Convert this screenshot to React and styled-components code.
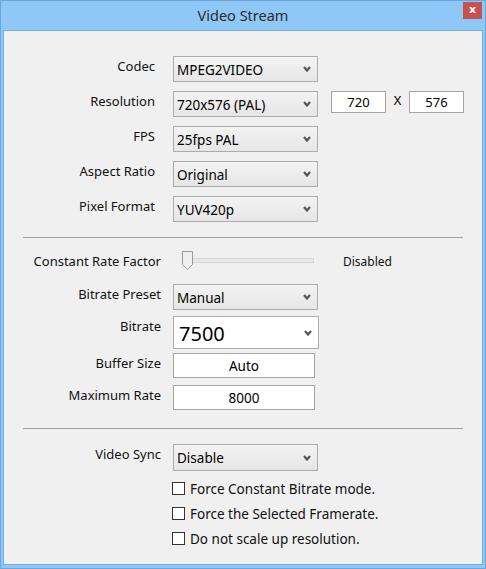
import React from 'react';
import styled, { createGlobalStyle } from 'styled-components';

const GlobalStyle = createGlobalStyle`
  html, body { margin: 0; padding: 0; background: #8fc7f7; }
  body { font-family: "Noto Sans", "Open Sans", Arial, sans-serif; color: #000; }
  * { box-sizing: border-box; }
`;

const Frame = styled.div`
  width: 486px;
  height: 569px;
  background: #8fc7f7;
  border: 1px solid #6aa6df;
  display: flex;
  flex-direction: column;
  padding: 0 2px 3px 2px;
`;

const TitleBar = styled.div`
  height: 29px;
  position: relative;
  display: flex;
  justify-content: center;
  align-items: center;
  padding-bottom: 2px;
  font-size: 14.5px;
  color: #2b2b2b;
`;

const CloseButton = styled.div`
  position: absolute;
  top: 1px;
  right: 1px;
  width: 19px;
  height: 17px;
  background: #c75050;
  color: #fff;
  font-family: "DejaVu Sans", sans-serif;
  font-weight: 700;
  font-size: 11px;
  line-height: 15px;
  text-align: center;
`;

const Content = styled.div`
  flex: 1;
  background: #f0f0f0;
  border: 1px solid #74ade3;
  padding-top: 25px;
  display: flex;
  flex-direction: column;
`;

const Row = styled.div`
  display: flex;
  align-items: ${p => (p.$center ? 'center' : 'flex-start')};
  margin-top: ${p => p.$mt || 0}px;
  height: ${p => p.$h || 26}px;
`;

const Label = styled.div`
  width: 169px;
  padding-right: ${p => p.$inset || 18}px;
  padding-top: ${p => (p.$center ? 0 : 1)}px;
  text-align: right;
  font-size: 13px;
  line-height: 18px;
  color: #111;
  white-space: nowrap;
`;

const Combo = styled.div`
  width: ${p => p.$w || 145}px;
  height: 100%;
  border: 1px solid #acacac;
  background: ${p => (p.$editable ? '#fff' : 'linear-gradient(#f3f3f3, #e6e6e6)')};
  display: flex;
  align-items: center;
  padding: 0 6px 0 ${p => (p.$big ? 5 : 3)}px;
  font-size: ${p => (p.$big ? 20 : 13.5)}px;
  color: #000;
`;

const ComboText = styled.span`
  flex: 1;
  white-space: nowrap;
  padding-top: ${p => (p.$big ? 2 : 1)}px;
`;

const Field = styled.div`
  width: ${p => p.$w}px;
  height: ${p => p.$h}px;
  margin-left: ${p => p.$ml || 0}px;
  background: #fff;
  border: 1px solid #a5a5a5;
  display: flex;
  align-items: center;
  justify-content: center;
  font-size: ${p => p.$fs || 13}px;
`;

const Times = styled.span`
  width: 23px;
  text-align: center;
  font-size: 13px;
  padding-bottom: 4px;
`;

const Separator = styled.div`
  margin: ${p => p.$mt}px 0 0 19px;
  width: 440px;
  height: 1px;
  background: #a0a0a0;
`;

const SliderWrap = styled.div`
  position: relative;
  width: 132px;
  height: 20px;
  margin-left: 9px;
`;

const Track = styled.div`
  position: absolute;
  left: 3px;
  right: 0;
  top: 7px;
  height: 5px;
  background: #e7eaea;
  border: 1px solid #d6d6d6;
`;

const Thumb = styled.svg`
  position: absolute;
  left: 0;
  top: 0;
`;

const Status = styled.span`
  margin-left: 29px;
  font-size: 12px;
  color: #111;
`;

const CheckRow = styled.label`
  display: flex;
  align-items: center;
  height: 25px;
  padding-left: 168px;
  font-size: 13.5px;
  color: #111;
  margin-top: ${p => p.$mt || 0}px;
`;

const Box = styled.span`
  width: 13px;
  height: 13px;
  border: 1px solid #333;
  background: #fff;
  margin-right: 5px;
  flex: none;
`;

const Chevron = () => (
  <svg width="8" height="6" viewBox="0 0 8 6">
    <polyline points="1,1 4,4.5 7,1" fill="none" stroke="#555" strokeWidth="2.2" />
  </svg>
);

const Select = ({ value, w, big, editable }) => (
  <Combo $w={w} $big={big} $editable={editable}>
    <ComboText $big={big}>{value}</ComboText>
    <Chevron />
  </Combo>
);

const App = () => (
  <>
    <GlobalStyle />
    <Frame>
      <TitleBar>
        Video Stream
        <CloseButton>x</CloseButton>
      </TitleBar>
      <Content>
        <Row>
          <Label>Codec</Label>
          <Select value="MPEG2VIDEO" />
        </Row>
        <Row $mt={9}>
          <Label>Resolution</Label>
          <Select value="720x576 (PAL)" />
          <Field $w={55} $h={22} $ml={13}>720</Field>
          <Times>X</Times>
          <Field $w={55} $h={22}>576</Field>
        </Row>
        <Row $mt={9}>
          <Label>FPS</Label>
          <Select value="25fps PAL" />
        </Row>
        <Row $mt={9}>
          <Label>Aspect Ratio</Label>
          <Select value="Original" />
        </Row>
        <Row $mt={9}>
          <Label>Pixel Format</Label>
          <Select value="YUV420p" />
        </Row>

        <Separator $mt={15} />

        <Row $mt={13} $h={20} $center>
          <Label $inset={12} $center>Constant Rate Factor</Label>
          <SliderWrap>
            <Track />
            <Thumb width="12" height="20" viewBox="0 0 12 20">
              <path d="M0.5 0.5 H10.5 V13.5 L5.5 18.5 L0.5 13.5 Z" fill="#f0f0f0" stroke="#9a9a9a" />
            </Thumb>
          </SliderWrap>
          <Status>Disabled</Status>
        </Row>
        <Row $mt={13}>
          <Label $inset={12}>Bitrate Preset</Label>
          <Select value="Manual" />
        </Row>
        <Row $mt={6} $h={33}>
          <Label $inset={12}>Bitrate</Label>
          <Select value="7500" w={146} big editable />
        </Row>
        <Row $mt={4} $h={25}>
          <Label $inset={12}>Buffer Size</Label>
          <Field $w={142} $h={25} $fs={13.5}>Auto</Field>
        </Row>
        <Row $mt={7} $h={25}>
          <Label $inset={12}>Maximum Rate</Label>
          <Field $w={142} $h={25} $fs={13.5}>8000</Field>
        </Row>

        <Separator $mt={18} />

        <Row $mt={15} $h={27}>
          <Label $inset={12}>Video Sync</Label>
          <Select value="Disable" />
        </Row>
        <CheckRow $mt={5}><Box />Force Constant Bitrate mode.</CheckRow>
        <CheckRow><Box />Force the Selected Framerate.</CheckRow>
        <CheckRow><Box />Do not scale up resolution.</CheckRow>
      </Content>
    </Frame>
  </>
);

export default App;
